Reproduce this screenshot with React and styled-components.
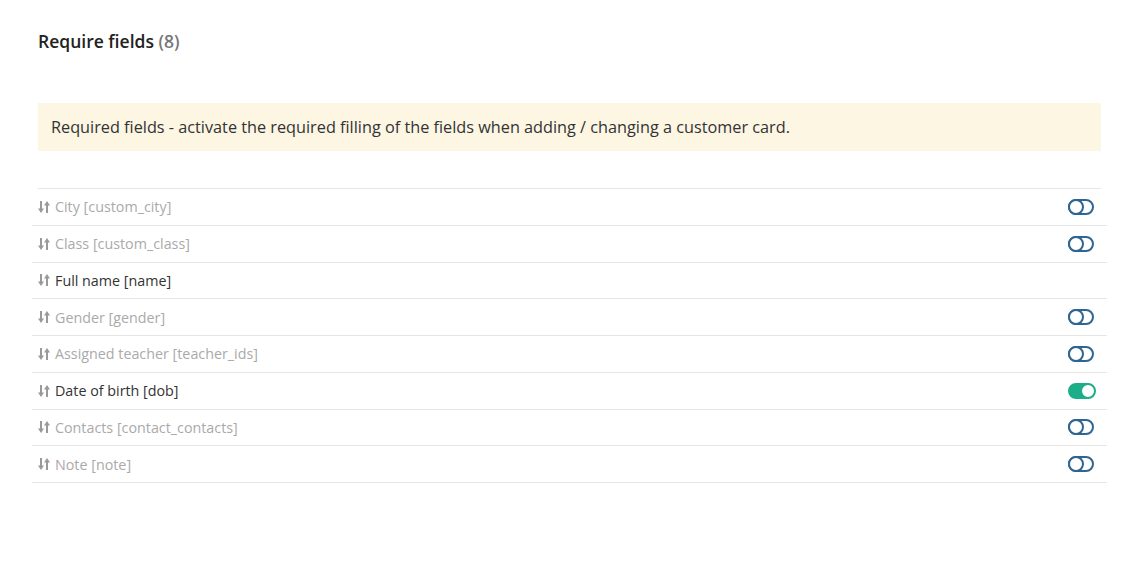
import React from "react";
import styled, { createGlobalStyle } from "styled-components";

const GlobalStyle = createGlobalStyle`
  body {
    margin: 0;
    background: #fff;
    font-family: "Open Sans", "Liberation Sans", sans-serif;
  }
`;

const Page = styled.div`
  padding: 29px 45px 40px 38px;
`;

const Title = styled.h2`
  margin: 0;
  font-size: 17.5px;
  line-height: 24px;
  font-weight: 600;
  color: #222;
`;

const Count = styled.span`
  color: #777;
`;

const Notice = styled.div`
  margin-top: 50px;
  height: 48px;
  display: flex;
  align-items: center;
  padding: 0 13px;
  background: #fcf6e3;
  color: #333;
  font-size: 16.25px;
`;

const List = styled.div`
  margin-top: 37px;
  border-top: 1px solid #e6e6e6;
`;

const Row = styled.div`
  height: 35.75px;
  margin: 0 -6px;
  padding: 0 13px 0 6px;
  display: flex;
  align-items: center;
  justify-content: space-between;
  border-bottom: 1px solid #e6e6e6;
`;

const Label = styled.div`
  display: flex;
  align-items: center;
  gap: 5px;
  font-size: 14.3px;
  color: ${(p) => (p.$active ? "#333" : "#aaa")};
`;

const Toggle = styled.span`
  position: relative;
  width: 26px;
  height: 16px;
  box-sizing: border-box;
  border-radius: 8px;
  border: 2px solid ${(p) => (p.$on ? "#1bae88" : "#2f6592")};
  background: ${(p) => (p.$on ? "#1bae88" : "#fff")};

  &::after {
    content: "";
    position: absolute;
    top: -2px;
    left: ${(p) => (p.$on ? "10px" : "-2px")};
    width: 16px;
    height: 16px;
    box-sizing: border-box;
    border-radius: 50%;
    border: 2px solid ${(p) => (p.$on ? "#1bae88" : "#2f6592")};
    background: #fff;
  }
`;

const SortIcon = () => (
  <svg width="12" height="12" viewBox="0 0 12 12" fill="#999">
    <rect x="2" y="0" width="2" height="8" />
    <path d="M0 7.5h6L3 12z" />
    <rect x="8" y="4" width="2" height="8" />
    <path d="M6 4.5h6L9 0z" />
  </svg>
);

const fields = [
  { name: "City", key: "custom_city", toggle: "off" },
  { name: "Class", key: "custom_class", toggle: "off" },
  { name: "Full name", key: "name", active: true },
  { name: "Gender", key: "gender", toggle: "off" },
  { name: "Assigned teacher", key: "teacher_ids", toggle: "off" },
  { name: "Date of birth", key: "dob", active: true, toggle: "on" },
  { name: "Contacts", key: "contact_contacts", toggle: "off" },
  { name: "Note", key: "note", toggle: "off" },
];

export default function App() {
  return (
    <Page>
      <GlobalStyle />
      <Title>
        Require fields <Count>(8)</Count>
      </Title>
      <Notice>
        Required fields - activate the required filling of the fields when adding / changing a customer card.
      </Notice>
      <List>
        {fields.map((f) => (
          <Row key={f.key}>
            <Label $active={f.active}>
              <SortIcon />
              {f.name} [{f.key}]
            </Label>
            {f.toggle && <Toggle $on={f.toggle === "on"} />}
          </Row>
        ))}
      </List>
    </Page>
  );
}
